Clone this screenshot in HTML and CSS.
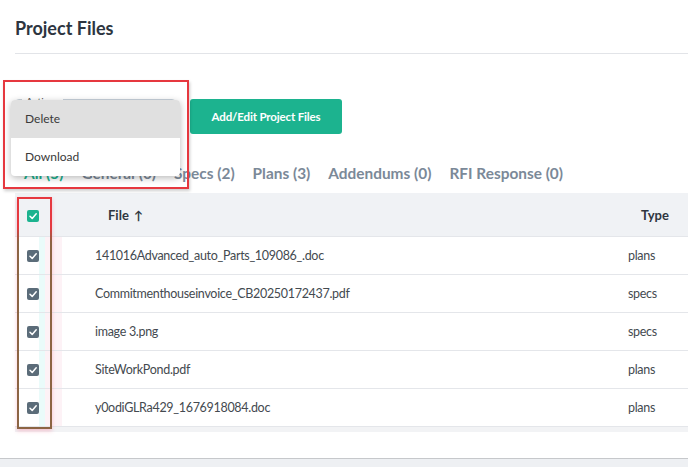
FILE: index.html
```html
<!DOCTYPE html>
<html lang="en">
<head>
    <meta charset="UTF-8">
    <meta name="viewport" content="width=device-width, initial-scale=1.0">
    <title>Project Files</title>
    <link rel="stylesheet" href="styles.css">
</head>
<body>
    <div class="page">
        <h1 class="title">Project Files</h1>

        <div class="toolbar">
            <div class="actions">
                <div class="select"><span class="select-label">Actions</span></div>
                <ul class="menu">
                    <li class="menu-item is-hover">Delete</li>
                    <li class="menu-item">Download</li>
                </ul>
            </div>
            <button class="btn-primary">Add/Edit Project Files</button>
        </div>

        <nav class="tabs">
            <a class="tab is-active">All (5)</a>
            <a class="tab">General (0)</a>
            <a class="tab">Specs (2)</a>
            <a class="tab">Plans (3)</a>
            <a class="tab">Addendums (0)</a>
            <a class="tab">RFI Response (0)</a>
        </nav>

        <div class="table-wrap">
            <table class="files">
                <colgroup>
                    <col class="col-check">
                    <col class="col-file">
                    <col class="col-type">
                </colgroup>
                <thead>
                    <tr>
                        <th class="cell-check"><span class="check check-all"><svg viewBox="0 0 12 12"><polyline points="3 6.3 5.2 8.4 9.2 3.8"></polyline></svg></span></th>
                        <th class="th-file">File <span class="sort">&#8593;</span></th>
                        <th class="th-type">Type</th>
                    </tr>
                </thead>
                <tbody>
                    <tr>
                        <td class="cell-check"><span class="check"><svg viewBox="0 0 12 12"><polyline points="3 6.3 5.2 8.4 9.2 3.8"></polyline></svg></span></td>
                        <td>141016Advanced_auto_Parts_109086_.doc</td>
                        <td class="cell-type">plans</td>
                    </tr>
                    <tr>
                        <td class="cell-check"><span class="check"><svg viewBox="0 0 12 12"><polyline points="3 6.3 5.2 8.4 9.2 3.8"></polyline></svg></span></td>
                        <td>Commitmenthouseinvoice_CB20250172437.pdf</td>
                        <td class="cell-type">specs</td>
                    </tr>
                    <tr>
                        <td class="cell-check"><span class="check"><svg viewBox="0 0 12 12"><polyline points="3 6.3 5.2 8.4 9.2 3.8"></polyline></svg></span></td>
                        <td>image 3.png</td>
                        <td class="cell-type">specs</td>
                    </tr>
                    <tr>
                        <td class="cell-check"><span class="check"><svg viewBox="0 0 12 12"><polyline points="3 6.3 5.2 8.4 9.2 3.8"></polyline></svg></span></td>
                        <td>SiteWorkPond.pdf</td>
                        <td class="cell-type">plans</td>
                    </tr>
                    <tr>
                        <td class="cell-check"><span class="check"><svg viewBox="0 0 12 12"><polyline points="3 6.3 5.2 8.4 9.2 3.8"></polyline></svg></span></td>
                        <td>y0odiGLRa429_1676918084.doc</td>
                        <td class="cell-type">plans</td>
                    </tr>
                </tbody>
            </table>
        </div>
    </div>
    <div class="footer-bar"></div>

    <!-- annotation boxes -->
    <div class="mark mark-menu"></div>
    <div class="mark mark-checks"></div>
</body>
</html>
```

FILE: styles.css
```css
body {
    margin: 0;
    height: 467px;
    overflow: hidden;
    position: relative;
    background: #fff;
    font-family: Lato, "Open Sans", sans-serif;
    color: #3b4148;
}

.page {
    padding-left: 15px;
    height: 458px;
}

.title {
    margin: 0;
    padding: 17px 0 13px;
    font-size: 18px;
    font-weight: 700;
    line-height: 23px;
    color: #2d3540;
    border-bottom: 1px solid #e2e4e8;
}

.toolbar {
    display: flex;
    align-items: flex-start;
    gap: 14px;
    margin-top: 45px;
}

.actions {
    position: relative;
    width: 161px;
}

.select {
    height: 35px;
    border: 1px solid #c9d3dc;
    border-radius: 4px;
    box-sizing: border-box;
    position: relative;
}

.select-label {
    position: absolute;
    top: -5px;
    left: 6px;
    padding: 0 4px;
    background: #fff;
    font-size: 10px;
    color: #555;
}

.menu {
    position: absolute;
    top: 1px;
    left: -4px;
    width: 169px;
    margin: 0;
    padding: 0;
    list-style: none;
    background: #fff;
    border-radius: 4px;
    box-shadow: 0 2px 7px rgba(0, 0, 0, 0.28);
    overflow: hidden;
    z-index: 10;
}

.menu-item {
    height: 38px;
    line-height: 38px;
    padding-left: 14px;
    font-size: 12px;
    color: #3a3a3a;
}

.menu-item.is-hover {
    background: #e0e0e0;
}

.btn-primary {
    width: 152px;
    height: 35px;
    border: 0;
    border-radius: 3px;
    background: #1cb38f;
    color: #fff;
    font-family: inherit;
    font-size: 11.5px;
    letter-spacing: -0.15px;
    font-weight: 700;
    cursor: pointer;
}

.tabs {
    display: flex;
    gap: 18px;
    padding: 28px 0 0 9px;
    height: 31px;
}

.tab {
    font-size: 15.4px;
    font-weight: 700;
    color: #7b8998;
    line-height: 22px;
}

.tab.is-active {
    color: #1cb38f;
}

.table-wrap {
    border-bottom: 5px solid #f2f3f5;
}

.files {
    width: 100%;
    border-collapse: collapse;
    table-layout: fixed;
    font-size: 12.5px;
    letter-spacing: -0.3px;
}

.col-check { width: 66px; }
.col-type { width: 87px; }

.files th {
    height: 43px;
    background: #f0f2f5;
    text-align: left;
    font-weight: 700;
    font-size: 13px;
    letter-spacing: 0;
    color: #2f3640;
    padding: 0;
    border-bottom: 1px solid #e4e6ea;
}

.files td {
    height: 37px;
    padding: 0 0 0 14px;
    color: #444a50;
    border-bottom: 1px solid #e4e6ea;
    white-space: nowrap;
}

.files .th-file { padding-left: 27px; }
.files .th-type { padding-left: 40px; }
.files .cell-type { padding-left: 27px; }

.files .cell-check {
    padding-left: 12px;
    background: linear-gradient(90deg, transparent 24px, #eafbfa 24px, #eafbfa 30px, #fdf2f6 30px, #fdf2f6 47px, transparent 47px);
}

.files th.cell-check {
    background: #f0f2f5;
}

.sort {
    font-size: 12px;
    margin-left: 2px;
}

.check {
    display: block;
    width: 12px;
    height: 12px;
    border-radius: 2px;
    background: #5b6c79;
}

.files th .check {
    margin-top: 2px;
}

.check-all {
    background: #1cb38f;
}

.check svg {
    display: block;
    width: 12px;
    height: 12px;
    fill: none;
    stroke: #fff;
    stroke-width: 1.5;
    stroke-linecap: round;
    stroke-linejoin: round;
}

.footer-bar {
    height: 9px;
    border-top: 1px solid #c6c8cb;
    background: #eef0f3;
}

.mark {
    position: absolute;
    box-sizing: border-box;
    border: 2px solid #e6383f;
    z-index: 20;
}

.mark-menu {
    left: 3px;
    top: 80px;
    width: 186px;
    height: 109px;
    box-shadow: 1px 2px 3px rgba(0, 0, 0, 0.2);
}

.mark-checks {
    left: 17px;
    top: 197px;
    width: 35px;
    height: 232px;
    border-image: linear-gradient(#e6383f 0, #e6383f 30px, #8c6443 45px, #8c6443 100%) 2;
    box-shadow: 0 2px 4px rgba(240, 120, 150, 0.4);
}
```
